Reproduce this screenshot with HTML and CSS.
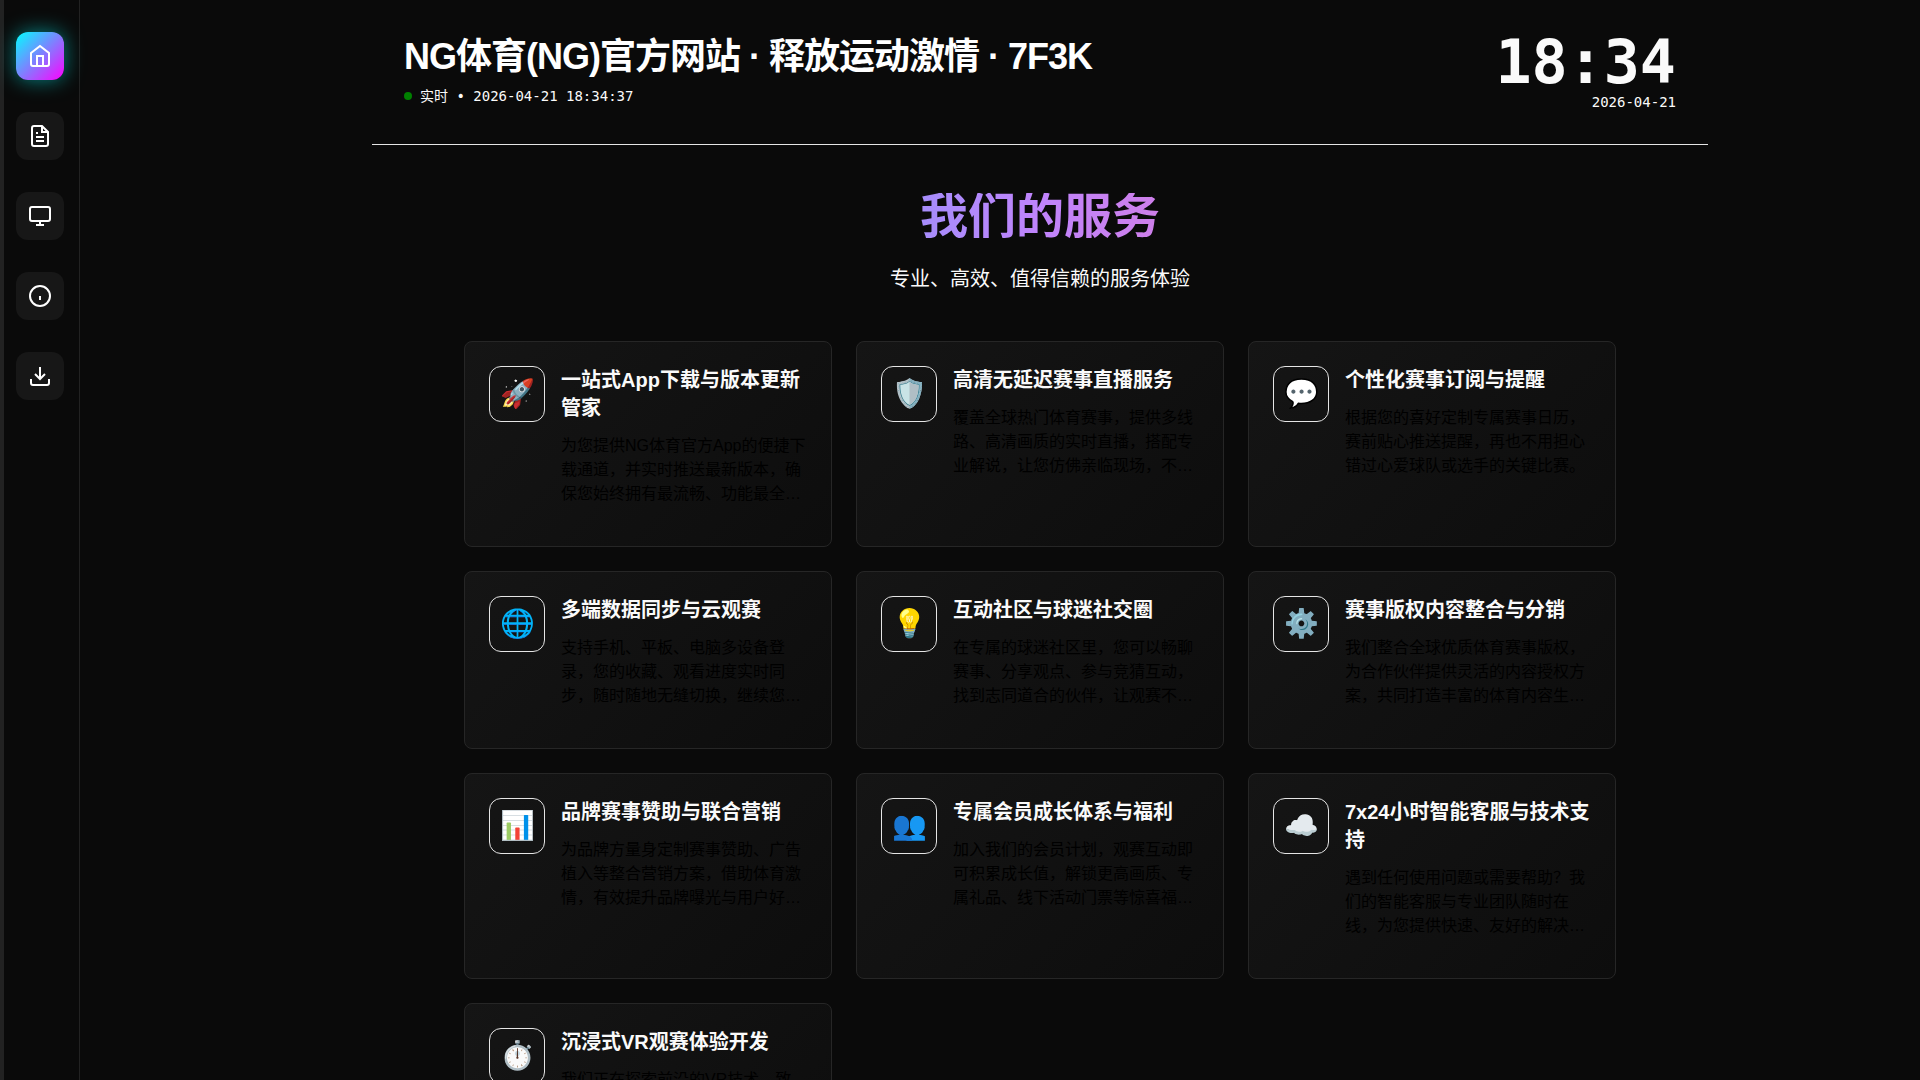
FILE: index.html
```html
<!DOCTYPE html>
<html lang="zh-CN">
<head>
<meta charset="utf-8">
<meta name="viewport" content="width=device-width, initial-scale=1">
<title>NG体育(NG)官方网站</title>
<link rel="stylesheet" href="styles.css">
</head>
<body>
<nav class="sidebar" aria-label="主导航">
  <a class="nav-link active" href="#home" aria-label="首页"><svg class="nav-icon" viewBox="0 0 24 24"><path d="M3 9l9-7 9 7v11a2 2 0 0 1-2 2H5a2 2 0 0 1-2-2z"/><path d="M9 22V12h6v10"/></svg></a>
  <a class="nav-link" href="#news" aria-label="资讯"><svg class="nav-icon" viewBox="0 0 24 24"><path d="M14 2H6a2 2 0 0 0-2 2v16a2 2 0 0 0 2 2h12a2 2 0 0 0 2-2V8z"/><path d="M14 2v6h6M16 13H8M16 17H8M10 9H8"/></svg></a>
  <a class="nav-link" href="#live" aria-label="直播"><svg class="nav-icon" viewBox="0 0 24 24"><rect x="2" y="3" width="20" height="14" rx="2"/><path d="M8 21h8M12 17v4"/></svg></a>
  <a class="nav-link" href="#about" aria-label="关于"><svg class="nav-icon" viewBox="0 0 24 24"><circle cx="12" cy="12" r="10"/><path d="M12 16v-4"/></svg></a>
  <a class="nav-link" href="#download" aria-label="下载"><svg class="nav-icon" viewBox="0 0 24 24"><path d="M21 15v4a2 2 0 0 1-2 2H5a2 2 0 0 1-2-2v-4M7 10l5 5 5-5M12 15V3"/></svg></a>
</nav>
<main class="content">
  <header class="page-header">
    <div class="brand">
      <h1 class="site-title">NG体育(NG)官方网站 · 释放运动激情 · 7F3K</h1>
      <p class="status"><span class="status-dot"></span>实时 • 2026-04-21 18:34:37</p>
    </div>
    <div class="clock">
      <div class="clock-time">18:34</div>
      <div class="clock-date">2026-04-21</div>
    </div>
  </header>
  <section class="services">
    <h2 class="section-title">我们的服务</h2>
    <p class="section-subtitle">专业、高效、值得信赖的服务体验</p>
    <div class="card-grid">
      <article class="card"><div class="card-icon">🚀</div><div class="card-body"><h3 class="card-title">一站式App下载与版本更新管家</h3><p class="card-text">为您提供NG体育官方App的便捷下载通道，并实时推送最新版本，确保您始终拥有最流畅、功能最全面的观赛体验。</p></div></article>
      <article class="card"><div class="card-icon">🛡️</div><div class="card-body"><h3 class="card-title">高清无延迟赛事直播服务</h3><p class="card-text">覆盖全球热门体育赛事，提供多线路、高清画质的实时直播，搭配专业解说，让您仿佛亲临现场，不错过任何精彩瞬间。</p></div></article>
      <article class="card"><div class="card-icon">💬</div><div class="card-body"><h3 class="card-title">个性化赛事订阅与提醒</h3><p class="card-text">根据您的喜好定制专属赛事日历，赛前贴心推送提醒，再也不用担心错过心爱球队或选手的关键比赛。</p></div></article>
      <article class="card"><div class="card-icon">🌐</div><div class="card-body"><h3 class="card-title">多端数据同步与云观赛</h3><p class="card-text">支持手机、平板、电脑多设备登录，您的收藏、观看进度实时同步，随时随地无缝切换，继续您的精彩观赛之旅。</p></div></article>
      <article class="card"><div class="card-icon">💡</div><div class="card-body"><h3 class="card-title">互动社区与球迷社交圈</h3><p class="card-text">在专属的球迷社区里，您可以畅聊赛事、分享观点、参与竞猜互动，找到志同道合的伙伴，让观赛不再孤单。</p></div></article>
      <article class="card"><div class="card-icon">⚙️</div><div class="card-body"><h3 class="card-title">赛事版权内容整合与分销</h3><p class="card-text">我们整合全球优质体育赛事版权，为合作伙伴提供灵活的内容授权方案，共同打造丰富的体育内容生态体系。</p></div></article>
      <article class="card"><div class="card-icon">📊</div><div class="card-body"><h3 class="card-title">品牌赛事赞助与联合营销</h3><p class="card-text">为品牌方量身定制赛事赞助、广告植入等整合营销方案，借助体育激情，有效提升品牌曝光与用户好感度。</p></div></article>
      <article class="card"><div class="card-icon">👥</div><div class="card-body"><h3 class="card-title">专属会员成长体系与福利</h3><p class="card-text">加入我们的会员计划，观赛互动即可积累成长值，解锁更高画质、专属礼品、线下活动门票等惊喜福利与特权。</p></div></article>
      <article class="card"><div class="card-icon">☁️</div><div class="card-body"><h3 class="card-title">7x24小时智能客服与技术支持</h3><p class="card-text">遇到任何使用问题或需要帮助？我们的智能客服与专业团队随时在线，为您提供快速、友好的解决方案与支持。</p></div></article>
      <article class="card"><div class="card-icon">⏱️</div><div class="card-body"><h3 class="card-title">沉浸式VR观赛体验开发</h3><p class="card-text">我们正在探索前沿的VR技术，致力于为您打造身临其境的沉浸式观赛体验，让您足不出户感受现场氛围。</p></div></article>
    </div>
  </section>
</main>
</body>
</html>
```
FILE: styles.css
```css
* {
  box-sizing: border-box;
  margin: 0;
  padding: 0;
}

body {
  min-height: 100vh;
  padding-left: 160px;
  background: #0a0a0a;
  color: #fafafa;
  font-family: "Liberation Sans", "Noto Sans CJK SC", sans-serif;
  font-size: 16px;
}

/* Navigation rail, fixed while the page scrolls */
.sidebar {
  position: fixed;
  inset: 0 auto 0 0;
  display: flex;
  flex-direction: column;
  gap: 32px;
  width: 80px;
  padding: 32px 15px 32px 12px;
  border-left: 4px solid #222222;
  border-right: 1px solid #222222;
  background: #0a0a0a;
}

.nav-link {
  display: flex;
  align-items: center;
  justify-content: center;
  width: 48px;
  height: 48px;
  border-radius: 12px;
  background: #171717;
  color: #ffffff;
}

.nav-link.active {
  background: linear-gradient(135deg, #00ffff, #ff00ff);
  box-shadow: 0 0 20px rgba(0, 255, 255, 0.5);
}

.nav-icon {
  width: 24px;
  height: 24px;
  fill: none;
  stroke: currentColor;
  stroke-width: 2;
}

.content {
  max-width: 1400px;
  margin: 0 auto;
  padding: 0 32px;
}

.page-header {
  display: flex;
  align-items: flex-start;
  justify-content: space-between;
  padding: 32px;
  border-bottom: 1px solid #e5e5e5;
}

.site-title {
  margin-bottom: 4px;
  color: #ffffff;
  font-size: 36px;
  font-weight: 700;
  letter-spacing: -1px;
  line-height: 50px;
}

.status {
  display: flex;
  align-items: center;
  gap: 8px;
  font-family: "DejaVu Sans Mono", "Noto Sans CJK SC", monospace;
  font-size: 14px;
  line-height: 20px;
}

.status-dot {
  width: 8px;
  height: 8px;
  border-radius: 50%;
  background: #008000;
}

.clock {
  font-family: "DejaVu Sans Mono", monospace;
  text-align: right;
}

.clock-time {
  font-size: 60px;
  font-weight: 700;
  line-height: 60px;
}

.clock-date {
  font-size: 14px;
  line-height: 20px;
}

.services {
  max-width: 1200px;
  margin: 0 auto;
  padding: 48px 24px;
}

.section-title {
  max-width: 896px;
  margin: 0 auto 24px;
  background: linear-gradient(90deg, #60a5fa, #c084fc, #f472b6);
  background-clip: text;
  -webkit-background-clip: text;
  color: transparent;
  font-size: 48px;
  font-weight: 700;
  line-height: 48px;
  text-align: center;
}

.section-subtitle {
  margin-bottom: 48px;
  font-size: 20px;
  line-height: 28px;
  text-align: center;
}

.card-grid {
  display: grid;
  grid-template-columns: repeat(3, 1fr);
  gap: 24px;
}

.card {
  display: flex;
  align-items: flex-start;
  gap: 16px;
  padding: 24px 24px 40px;
  border: 1px solid #262626;
  border-radius: 8px;
  background: linear-gradient(135deg, #151515, #0d0d0d);
}

.card-icon {
  display: flex;
  flex: none;
  align-items: center;
  justify-content: center;
  width: 56px;
  height: 56px;
  border: 1px solid #e5e5e5;
  border-radius: 12px;
  font-size: 28px;
  line-height: 28px;
}

.card-body {
  flex: 1;
  min-width: 0;
}

.card-title {
  margin-bottom: 12px;
  font-size: 20px;
  font-weight: 700;
  line-height: 28px;
}

.card-text {
  display: -webkit-box;
  overflow: hidden;
  color: #000000;
  line-height: 24px;
  -webkit-box-orient: vertical;
  -webkit-line-clamp: 3;
}

@media (max-width: 1100px) {
  .card-grid {
    grid-template-columns: repeat(2, 1fr);
  }
}
```
